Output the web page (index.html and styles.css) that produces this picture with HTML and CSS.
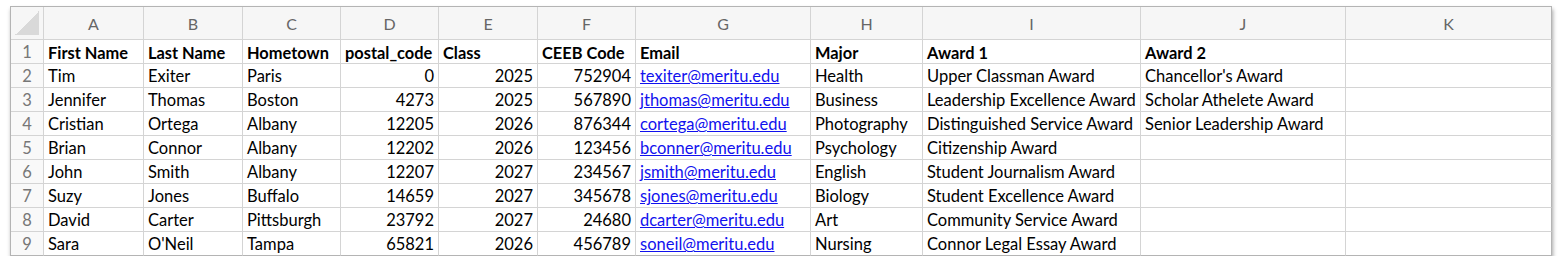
FILE: index.html
```html
<!DOCTYPE html>
<html lang="en">
<head>
  <meta charset="UTF-8">
  <title>Students</title>
  <link rel="stylesheet" href="styles.css">
</head>
<body>
  <div class="sheet">
    <!-- Column letters -->
    <div class="corner"></div>
    <div class="col-head">A</div>
    <div class="col-head">B</div>
    <div class="col-head">C</div>
    <div class="col-head">D</div>
    <div class="col-head">E</div>
    <div class="col-head">F</div>
    <div class="col-head">G</div>
    <div class="col-head">H</div>
    <div class="col-head">I</div>
    <div class="col-head">J</div>
    <div class="col-head">K</div>

    <!-- Row 1 -->
    <div class="row-head">1</div>
    <div class="cell bold">First Name</div>
    <div class="cell bold">Last Name</div>
    <div class="cell bold">Hometown</div>
    <div class="cell bold">postal_code</div>
    <div class="cell bold">Class</div>
    <div class="cell bold">CEEB Code</div>
    <div class="cell bold">Email</div>
    <div class="cell bold">Major</div>
    <div class="cell bold">Award 1</div>
    <div class="cell bold">Award 2</div>
    <div class="cell"></div>

    <!-- Row 2 -->
    <div class="row-head">2</div>
    <div class="cell">Tim</div>
    <div class="cell">Exiter</div>
    <div class="cell">Paris</div>
    <div class="cell num">0</div>
    <div class="cell num">2025</div>
    <div class="cell num">752904</div>
    <div class="cell"><a href="#">texiter@meritu.edu</a></div>
    <div class="cell">Health</div>
    <div class="cell">Upper Classman Award</div>
    <div class="cell">Chancellor's Award</div>
    <div class="cell"></div>

    <!-- Row 3 -->
    <div class="row-head">3</div>
    <div class="cell">Jennifer</div>
    <div class="cell">Thomas</div>
    <div class="cell">Boston</div>
    <div class="cell num">4273</div>
    <div class="cell num">2025</div>
    <div class="cell num">567890</div>
    <div class="cell"><a href="#">jthomas@meritu.edu</a></div>
    <div class="cell">Business</div>
    <div class="cell">Leadership Excellence Award</div>
    <div class="cell">Scholar Athelete Award</div>
    <div class="cell"></div>

    <!-- Row 4 -->
    <div class="row-head">4</div>
    <div class="cell">Cristian</div>
    <div class="cell">Ortega</div>
    <div class="cell">Albany</div>
    <div class="cell num">12205</div>
    <div class="cell num">2026</div>
    <div class="cell num">876344</div>
    <div class="cell"><a href="#">cortega@meritu.edu</a></div>
    <div class="cell">Photography</div>
    <div class="cell">Distinguished Service Award</div>
    <div class="cell">Senior Leadership Award</div>
    <div class="cell"></div>

    <!-- Row 5 -->
    <div class="row-head">5</div>
    <div class="cell">Brian</div>
    <div class="cell">Connor</div>
    <div class="cell">Albany</div>
    <div class="cell num">12202</div>
    <div class="cell num">2026</div>
    <div class="cell num">123456</div>
    <div class="cell"><a href="#">bconner@meritu.edu</a></div>
    <div class="cell">Psychology</div>
    <div class="cell">Citizenship Award</div>
    <div class="cell"></div>
    <div class="cell"></div>

    <!-- Row 6 -->
    <div class="row-head">6</div>
    <div class="cell">John</div>
    <div class="cell">Smith</div>
    <div class="cell">Albany</div>
    <div class="cell num">12207</div>
    <div class="cell num">2027</div>
    <div class="cell num">234567</div>
    <div class="cell"><a href="#">jsmith@meritu.edu</a></div>
    <div class="cell">English</div>
    <div class="cell">Student Journalism Award</div>
    <div class="cell"></div>
    <div class="cell"></div>

    <!-- Row 7 -->
    <div class="row-head">7</div>
    <div class="cell">Suzy</div>
    <div class="cell">Jones</div>
    <div class="cell">Buffalo</div>
    <div class="cell num">14659</div>
    <div class="cell num">2027</div>
    <div class="cell num">345678</div>
    <div class="cell"><a href="#">sjones@meritu.edu</a></div>
    <div class="cell">Biology</div>
    <div class="cell">Student Excellence Award</div>
    <div class="cell"></div>
    <div class="cell"></div>

    <!-- Row 8 -->
    <div class="row-head">8</div>
    <div class="cell">David</div>
    <div class="cell">Carter</div>
    <div class="cell">Pittsburgh</div>
    <div class="cell num">23792</div>
    <div class="cell num">2027</div>
    <div class="cell num">24680</div>
    <div class="cell"><a href="#">dcarter@meritu.edu</a></div>
    <div class="cell">Art</div>
    <div class="cell">Community Service Award</div>
    <div class="cell"></div>
    <div class="cell"></div>

    <!-- Row 9 -->
    <div class="row-head">9</div>
    <div class="cell">Sara</div>
    <div class="cell">O'Neil</div>
    <div class="cell">Tampa</div>
    <div class="cell num">65821</div>
    <div class="cell num">2026</div>
    <div class="cell num">456789</div>
    <div class="cell"><a href="#">soneil@meritu.edu</a></div>
    <div class="cell">Nursing</div>
    <div class="cell">Connor Legal Essay Award</div>
    <div class="cell"></div>
    <div class="cell"></div>
  </div>
</body>
</html>
```

FILE: styles.css
```css
* {
  margin: 0;
  padding: 0;
  box-sizing: border-box;
}

body {
  background-color: #fff;
  padding: 6px 0 0 10px;
  font-family: Lato, "Open Sans", sans-serif;
  font-size: 16.5px;
  color: #000;
}

/* Sheet frame */
.sheet {
  display: grid;
  grid-template-columns: 33px 100px 99px 98px 98px 99px 98px 175px 112px 218px 205px 206px;
  grid-template-rows: 33px repeat(9, 24px);
  width: 1542px;
  border: 1px solid #b4b4b4;
  border-right: none;
  border-bottom: none;
  box-shadow: 1px 3px 4px rgba(0, 0, 0, 0.35);
}

.sheet > div {
  border-right: 1px solid #d4d4d4;
  border-bottom: 1px solid #d4d4d4;
  white-space: nowrap;
  overflow: hidden;
  display: flex;
  align-items: center;
  padding-top: 1px;
}

.sheet > div:nth-child(12n) {
  border-right-color: #b4b4b4;
}

.sheet > div:nth-last-child(-n+12) {
  border-bottom-color: #b4b4b4;
}

/* Top-left corner with the triangle */
.corner {
  background: linear-gradient(135deg, #f6f6f6 50%, #d9d9d9 50%);
  border-right-color: #d0d0d0;
  box-shadow: inset 0 0 0 4px #f6f6f6;
}

.col-head {
  justify-content: center;
  background-color: #f6f6f6;
  color: #666;
  font-size: 16px;
}

.row-head {
  justify-content: center;
  background-color: #f9f9f9;
  color: #777;
}

.cell {
  padding-left: 4px;
  padding-right: 4px;
}

.cell.num {
  justify-content: flex-end;
}

.bold {
  font-weight: bold;
  font-size: 16.4px;
  padding-right: 2px;
}

.cell a {
  color: #1111ee;
  text-decoration: underline;
}
```
